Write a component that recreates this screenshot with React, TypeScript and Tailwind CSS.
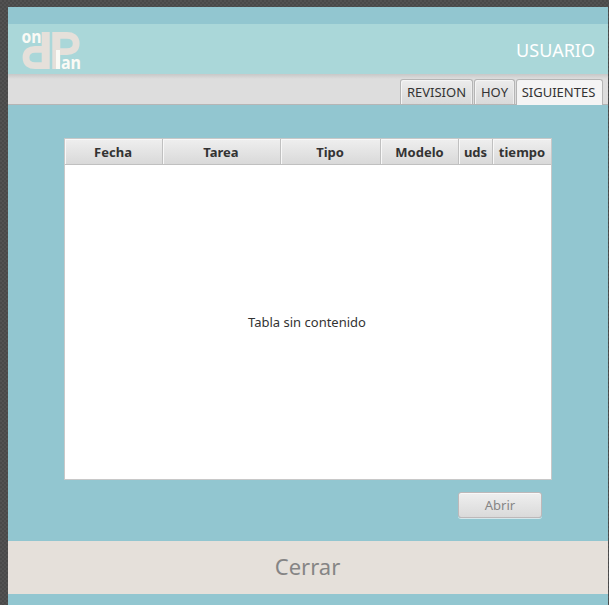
const tabs = [
  { label: "REVISION", width: "w-[73px]", active: false },
  { label: "HOY", width: "w-[41px]", active: false },
  { label: "SIGUIENTES", width: "w-[87px]", active: true },
];

const columns = [
  { label: "Fecha", width: "w-[98px] pr-px" },
  { label: "Tarea", width: "w-[118px] pr-px" },
  { label: "Tipo", width: "w-[100px] pr-px" },
  { label: "Modelo", width: "w-[78px]" },
  { label: "uds", width: "w-[34px]" },
  { label: "tiempo", width: "w-[58px]" },
];

function Logo() {
  return (
    <svg width="62" height="42" viewBox="0 0 62 42" className="overflow-visible font-['Noto_Sans',sans-serif]">
      <g fill="none" stroke="#e5e0da" strokeWidth="6.8">
        <path d="M24.6 34.6H14C9 34.6 5 32.5 5 26.5S9 18.4 14 18.4H24" />
        <path d="M35.4 4.4H46C51 4.4 55.2 6.5 55.2 12.5S51 20.6 46 20.6H36" />
      </g>
      <rect x="20.7" y="1" width="8" height="37" fill="#e5e0da" />
      <rect x="31.3" y="1" width="8" height="37" fill="#e5e0da" />
      <rect x="35" y="19" width="4" height="19" fill="#fafaf5" />
      <g fill="#fafaf5" fontWeight="700" fontSize="18">
        <text x="0.5" y="12" textLength="20" lengthAdjust="spacingAndGlyphs">on</text>
        <text x="40" y="38" textLength="20" lengthAdjust="spacingAndGlyphs">an</text>
      </g>
    </svg>
  );
}

export default function App() {
  return (
    <div className="h-[605px] w-[609px] overflow-hidden bg-[#4d4d4d] bg-[repeating-conic-gradient(#494949_0_25%,#525252_0_50%)] bg-size-[4px_4px] pt-[7px] pr-px pl-2 font-['Noto_Sans',sans-serif] text-[13px] text-[#333]">
      <div className="flex h-full flex-col bg-[#92c6d0] pt-[17px]">
        <header className="flex h-[50px] shrink-0 items-start justify-between bg-[#aad7d9] pt-[7px] pr-[13px] pl-[13px]">
          <Logo />
          <span className="mt-[6px] text-[18px] leading-[26px] text-white">USUARIO</span>
        </header>

        <nav className="flex h-[31px] shrink-0 items-end justify-end gap-px border-b border-[#b5b5b5] bg-[linear-gradient(#c8c8c8,#dddddd_5px)] pr-[5px]">
          {tabs.map((t) => (
            <button
              key={t.label}
              className={`rounded-t-[3px] border border-b-0 border-[#b5b5b5] ${t.width} ${
                t.active
                  ? "-mb-px h-[26px] bg-[#f4f4f4] pr-0.5 pb-px leading-[24px]"
                  : "h-[25px] bg-linear-to-b from-[#ececec] to-[#d9d9d9] leading-[24px] shadow-[inset_1px_1px_0_#f5f5f5,inset_-1px_0_0_#eee]"
              }`}
            >
              {t.label}
            </button>
          ))}
        </nav>

        <main className="flex h-[436px] shrink-0 flex-col pt-[33px] pr-[56px] pl-[56px]">
          <div className="flex h-[342px] flex-col border border-[#c8c8c8] bg-white">
            <div className="flex h-[26px] shrink-0 border-b border-[#c0c0c0] bg-linear-to-b from-[#efefef] to-[#d9d9d9]">
              {columns.map((c) => (
                <div
                  key={c.label}
                  className={`shrink-0 border-r border-[#c0c0c0] text-center leading-[26px] font-bold shadow-[inset_1px_1px_0_#f8f8f8] last:border-r-0 ${c.width}`}
                >
                  {c.label}
                </div>
              ))}
            </div>
            <div className="flex grow items-center justify-center pt-0.5 pr-0.5">Tabla sin contenido</div>
          </div>
          <button className="mt-3 mr-[10px] h-[26px] w-[84px] self-end rounded-[3px] border border-[#bdb8b9] bg-linear-to-b from-[#efefef] to-[#dadada] leading-[24px] text-[#858585] shadow-[0_1px_0_#d5e7eb,inset_0_1px_0_#f8f8f8]">
            Abrir
          </button>
        </main>

        <footer className="flex h-[53px] shrink-0 items-center justify-center bg-[#e5e0da] pr-px pb-[3px] text-[22px] text-[#858585]">
          <button>Cerrar</button>
        </footer>
      </div>
    </div>
  );
}
